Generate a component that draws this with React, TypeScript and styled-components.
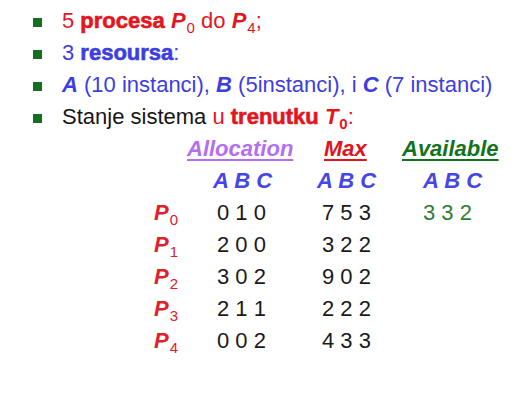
import { Fragment } from "react";
import styled, { createGlobalStyle } from "styled-components";

const Global = createGlobalStyle`
	html, body {
		margin: 0;
		background: #ffffff;
	}
	body {
		font-family: "Liberation Sans", Arial, sans-serif;
		color: #161616;
	}
`;

const Slide = styled.main`
	width: 525px;
	height: 402px;
	padding-top: 5px;
	box-sizing: border-box;
	font-size: 22px;
	line-height: 32px;
	overflow: hidden;
`;

const Lista = styled.ul`
	margin: 0;
	padding: 0;
	list-style: none;
`;

const Item = styled.li<{ $cor?: string }>`
	display: flex;
	align-items: center;
	gap: 20px;
	height: 32px;
	padding-left: 33px;
	color: ${(p) => p.$cor || "#161616"};
	white-space: nowrap;
`;

const Marcador = styled.span`
	width: 9px;
	height: 9px;
	margin-top: 2px;
	background: #13701f;
	flex: none;
`;

const Destaque = styled.span`
	color: #e3161f;
`;

const Forte = styled.b<{ $cor?: string }>`
	font-weight: 700;
	color: ${(p) => p.$cor || "inherit"};
	-webkit-text-stroke: 0.6px currentColor;
`;

const Var = styled.i<{ $cor?: string }>`
	font-weight: 700;
	font-style: italic;
	color: ${(p) => p.$cor || "inherit"};
`;

const Indice = styled.sub<{ $negrito?: boolean }>`
	font-size: 15px;
	line-height: 1;
	font-style: normal;
	font-weight: ${(p) => (p.$negrito ? 700 : 400)};
	vertical-align: -5px;
	margin-left: 1px;
`;

const Tabela = styled.div`
	display: grid;
	grid-template-columns: 180px 130px 85px 1fr;
	grid-auto-rows: 32px;
	white-space: nowrap;
`;

const Rotulo = styled.div`
	text-align: right;
	padding-right: 2px;
	color: #e0202a;
`;

const Cabecalho = styled.div<{ $cor: string; $recuo: number }>`
	padding-left: ${(p) => p.$recuo}px;
	color: ${(p) => p.$cor};
	font-weight: 700;
	font-style: italic;
	text-decoration: underline;
	text-decoration-thickness: 2px;
	text-underline-offset: 3px;
`;

const Colunas = styled.div<{ $recuo: number }>`
	padding-left: ${(p) => p.$recuo}px;
	color: #4646e8;
	font-weight: 700;
	font-style: italic;
`;

const Valor = styled.div<{ $recuo: number; $cor?: string }>`
	padding-left: ${(p) => p.$recuo}px;
	color: ${(p) => p.$cor || "#1a1a1a"};
`;

const Vazio = styled.div``;

const processos = [
	{ alloc: "0 1 0", max: "7 5 3", avail: "3 3 2" },
	{ alloc: "2 0 0", max: "3 2 2" },
	{ alloc: "3 0 2", max: "9 0 2" },
	{ alloc: "2 1 1", max: "2 2 2" },
	{ alloc: "0 0 2", max: "4 3 3" },
];

const VERMELHO = "#e3161f";
const AZUL = "#3d3de0";

export default function App() {
	return (
		<Slide>
			<Global />
			<Lista>
				<Item $cor={VERMELHO}>
					<Marcador />
					<span>
						5 <Forte>procesa</Forte> <Var>P<Indice>0</Indice></Var> do{" "}
						<Var>P<Indice>4</Indice></Var>;
					</span>
				</Item>
				<Item $cor={AZUL}>
					<Marcador />
					<span>
						3 <Forte>resoursa</Forte>:
					</span>
				</Item>
				<Item $cor={AZUL}>
					<Marcador />
					<span>
						<Var>A</Var> (10 instanci), <Var>B</Var> (5instanci), i <Var>C</Var> (7 instanci)
					</span>
				</Item>
				<Item>
					<Marcador />
					<span>
						Stanje sistema <Destaque>u</Destaque>{" "}
						<Forte $cor={VERMELHO}>trenutku</Forte>{" "}
						<Var $cor={VERMELHO}>T<Indice $negrito>0</Indice></Var>
						<Destaque>:</Destaque>
					</span>
				</Item>
			</Lista>

			<Tabela>
				<Vazio />
				<Cabecalho $cor="#b46ef0" $recuo={7}>Allocation</Cabecalho>
				<Cabecalho $cor="#e0141e" $recuo={14}>Max</Cabecalho>
				<Cabecalho $cor="#12731c" $recuo={7}>Available</Cabecalho>

				<Vazio />
				<Colunas $recuo={33}>A B C</Colunas>
				<Colunas $recuo={7}>A B C</Colunas>
				<Colunas $recuo={28}>A B C</Colunas>

				{processos.map((p, i) => (
					<Fragment key={i}>
						<Rotulo>
							<Var>P<Indice>{i}</Indice></Var>
						</Rotulo>
						<Valor $recuo={37}>{p.alloc}</Valor>
						<Valor $recuo={12}>{p.max}</Valor>
						<Valor $recuo={28} $cor="#2e7d34">{p.avail || ""}</Valor>
					</Fragment>
				))}
			</Tabela>
		</Slide>
	);
}
